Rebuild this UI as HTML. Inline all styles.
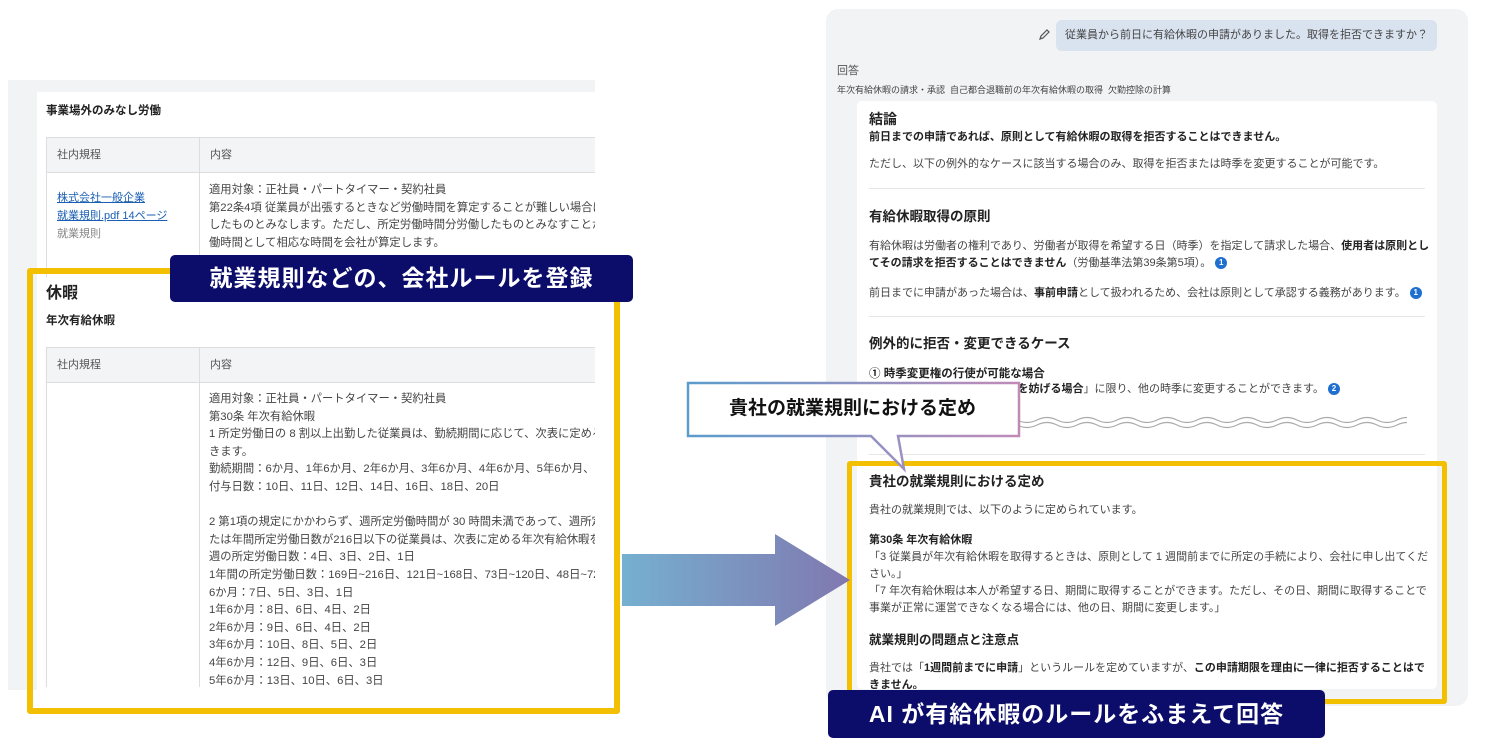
<!DOCTYPE html>
<html><head><meta charset="utf-8"><style>
*{margin:0;padding:0;box-sizing:border-box}
body{width:1505px;height:747px;background:#fff;position:relative;overflow:hidden;font-family:"Liberation Sans","Noto Sans CJK JP",sans-serif;color:#333}
.a{position:absolute}
.t{font-size:11px;line-height:17.6px;color:#444;white-space:nowrap}
.b{font-weight:bold;color:#222}
.th{background:#f3f4f6;border-top:1px solid #ddd;border-bottom:1px solid #ddd;height:36px;font-size:11px;color:#555;line-height:34px}
.r{font-size:11px;line-height:16.5px;color:#444;white-space:nowrap}
.num{display:inline-block;width:12px;height:12px;border-radius:6px;background:#1e6fd0;color:#fff;font-size:8px;line-height:12px;text-align:center;font-weight:bold;vertical-align:middle;margin-left:4px}
</style></head><body>
<!-- left panel -->
<div class="a" style="left:8px;top:80px;width:587px;height:610px;background:#f2f3f5"></div>
<div class="a" style="left:37px;top:92px;width:558px;height:598px;background:#fff;overflow:hidden">
 <div class="a b" style="left:9px;top:10px;font-size:11.5px">事業場外のみなし労働</div>
 <div class="a th" style="left:9px;top:45px;width:560px;border-left:1px solid #ddd"><span style="position:absolute;left:10px">社内規程</span><span style="position:absolute;left:163px">内容</span></div>
 <div class="a" style="left:162px;top:45px;width:1px;height:140px;background:#ddd"></div>
 <div class="a" style="left:9px;top:45px;width:1px;height:140px;background:#ddd"></div>
 <div class="a t" style="left:20px;top:98px;color:#1a5fb4;text-decoration:underline">株式会社一般企業<br>就業規則.pdf 14ページ</div>
 <div class="a t" style="left:20px;top:134px;color:#888">就業規則</div>
 <div class="a t" style="left:172px;top:90px;font-size:11.3px">適用対象：正社員・パートタイマー・契約社員<br>第22条4項 従業員が出張するときなど労働時間を算定することが難しい場合は、<br>したものとみなします。ただし、所定労働時間分労働したものとみなすことが不<br>働時間として相応な時間を会社が算定します。</div>
 <div class="a b" style="left:9px;top:187px;font-size:16px">休暇</div>
 <div class="a b" style="left:9px;top:220px;font-size:11.5px">年次有給休暇</div>
 <div class="a th" style="left:9px;top:255px;width:560px;border-left:1px solid #ddd"><span style="position:absolute;left:10px">社内規程</span><span style="position:absolute;left:163px">内容</span></div>
 <div class="a" style="left:162px;top:255px;width:1px;height:340px;background:#ddd"></div>
 <div class="a" style="left:9px;top:255px;width:1px;height:340px;background:#ddd"></div>
 <div class="a t" style="left:172px;top:299px;font-size:11.3px">適用対象：正社員・パートタイマー・契約社員<br>第30条 年次有給休暇<br>1 所定労働日の 8 割以上出勤した従業員は、勤続期間に応じて、次表に定める年<br>きます。<br>勤続期間：6か月、1年6か月、2年6か月、3年6か月、4年6か月、5年6か月、6年<br>付与日数：10日、11日、12日、14日、16日、18日、20日<br>&nbsp;<br>2 第1項の規定にかかわらず、週所定労働時間が 30 時間未満であって、週所定労<br>たは年間所定労働日数が216日以下の従業員は、次表に定める年次有給休暇を取<br>週の所定労働日数：4日、3日、2日、1日<br>1年間の所定労働日数：169日~216日、121日~168日、73日~120日、48日~72日<br>6か月：7日、5日、3日、1日<br>1年6か月：8日、6日、4日、2日<br>2年6か月：9日、6日、4日、2日<br>3年6か月：10日、8日、5日、2日<br>4年6か月：12日、9日、6日、3日<br>5年6か月：13日、10日、6日、3日</div>
</div>
<div class="a" style="left:27px;top:268px;width:593px;height:446px;border:6px solid #f2c000;border-radius:3px"></div>
<div class="a" style="left:170px;top:255px;width:463px;height:47px;background:#0c0c6b;border-radius:5px;color:#fff;font-size:23px;font-weight:bold;text-align:center;line-height:47px;letter-spacing:1px">就業規則などの、会社ルールを登録</div>

<!-- right panel -->
<div class="a" style="left:826px;top:9px;width:642px;height:697px;background:#f2f3f5;border-radius:12px"></div>
<svg class="a" style="left:1037px;top:28px" width="14" height="14"><path d="M3 11L4 8L10 2L12 4L6 10Z" fill="none" stroke="#555" stroke-width="1.2"/></svg>
<div class="a" style="left:1056px;top:20px;width:381px;height:31px;background:#d9e2ef;border-radius:6px;font-size:11px;line-height:31px;color:#444;text-align:center;white-space:nowrap">従業員から前日に有給休暇の申請がありました。取得を拒否できますか？</div>
<div class="a" style="left:837px;top:62px;font-size:11px;color:#555">回答</div>
<div class="a" style="left:837px;top:83px;font-size:9px;color:#444;white-space:nowrap">年次有給休暇の請求・承認&nbsp; 自己都合退職前の年次有給休暇の取得&nbsp; 欠勤控除の計算</div>
<div class="a" style="left:857px;top:101px;width:580px;height:588px;background:#fff;border-radius:5px;overflow:hidden">
 <div class="a b" style="left:12px;top:8px;font-size:14px">結論</div>
 <div class="a b" style="left:12px;top:27px;font-size:11px;white-space:nowrap">前日までの申請であれば、原則として有給休暇の取得を拒否することはできません。</div>
 <div class="a r" style="left:12px;top:55px">ただし、以下の例外的なケースに該当する場合のみ、取得を拒否または時季を変更することが可能です。</div>
 <div class="a" style="left:12px;top:87px;width:556px;height:1px;background:#e6e6e6"></div>
 <div class="a b" style="left:12px;top:104px;font-size:13.5px">有給休暇取得の原則</div>
 <div class="a r" style="left:12px;top:137px">有給休暇は労働者の権利であり、労働者が取得を希望する日（時季）を指定して請求した場合、<b class="b">使用者は原則とし</b><br><b class="b">てその請求を拒否することはできません</b>（労働基準法第39条第5項）。<span class="num">1</span></div>
 <div class="a r" style="left:12px;top:184px">前日までに申請があった場合は、<b class="b">事前申請</b>として扱われるため、会社は原則として承認する義務があります。<span class="num">1</span></div>
 <div class="a" style="left:12px;top:215px;width:556px;height:1px;background:#e6e6e6"></div>
 <div class="a b" style="left:12px;top:231px;font-size:13.5px">例外的に拒否・変更できるケース</div>
 <div class="a b" style="left:12px;top:264px;font-size:11.5px">① 時季変更権の行使が可能な場合</div>
 <div class="a r" style="left:12px;top:280px">事業主は、「<b class="b">事業の正常な運営を妨げる場合</b>」に限り、他の時季に変更することができます。<span class="num">2</span></div>
 <svg class="a" style="left:100px;top:313px" width="450" height="20"><path d="M0 6 q10 -5 20 0 t20 0 t20 0 t20 0 t20 0 t20 0 t20 0 t20 0 t20 0 t20 0 t20 0 t20 0 t20 0 t20 0 t20 0 t20 0 t20 0 t20 0 t20 0 t20 0 t20 0 t20 0 t20 0 M0 11 q10 -5 20 0 t20 0 t20 0 t20 0 t20 0 t20 0 t20 0 t20 0 t20 0 t20 0 t20 0 t20 0 t20 0 t20 0 t20 0 t20 0 t20 0 t20 0 t20 0 t20 0 t20 0 t20 0 t20 0" fill="none" stroke="#aaa" stroke-width="1.2"/></svg>
 <div class="a" style="left:12px;top:353px;width:556px;height:1px;background:#e6e6e6"></div>
 <div class="a b" style="left:12px;top:369px;font-size:13.5px">貴社の就業規則における定め</div>
 <div class="a r" style="left:12px;top:401px">貴社の就業規則では、以下のように定められています。</div>
 <div class="a r" style="left:12px;top:431px;line-height:17px"><b class="b">第30条 年次有給休暇</b><br>「3 従業員が年次有給休暇を取得するときは、原則として 1 週間前までに所定の手続により、会社に申し出てくだ<br>さい。」<br>「7 年次有給休暇は本人が希望する日、期間に取得することができます。ただし、その日、期間に取得することで<br>事業が正常に運営できなくなる場合には、他の日、期間に変更します。」</div>
 <div class="a b" style="left:12px;top:528px;font-size:12.5px">就業規則の問題点と注意点</div>
 <div class="a r" style="left:12px;top:559px">貴社では「<b class="b">1週間前までに申請</b>」というルールを定めていますが、<b class="b">この申請期限を理由に一律に拒否することはで</b><br><b class="b">きません。</b></div>
</div>
<div class="a" style="left:847px;top:461px;width:600px;height:243px;border:5px solid #f2c000;border-radius:3px"></div>

<!-- arrow -->
<svg class="a" style="left:620px;top:533px" width="232" height="94"><defs><linearGradient id="g" x1="0" x2="1"><stop offset="0" stop-color="#76b0d0"/><stop offset="1" stop-color="#8078b0"/></linearGradient></defs><path d="M2 21H155V1L230 47L155 93V73H2Z" fill="url(#g)"/></svg>

<!-- callout -->
<svg class="a" style="left:686px;top:381px" width="336" height="92"><defs><linearGradient id="c" x1="0" x2="1"><stop offset="0" stop-color="#5a9ccc"/><stop offset="1" stop-color="#c08ab8"/></linearGradient></defs><path d="M2 2H333V55H212L218 88L185 55H2Z" fill="#fff" stroke="url(#c)" stroke-width="2.5"/></svg>
<div class="a b" style="left:686px;top:381px;width:333px;height:55px;line-height:55px;text-align:center;font-size:19px;color:#111">貴社の就業規則における定め</div>

<div class="a" style="left:828px;top:690px;width:497px;height:48px;background:#0c0c6b;border-radius:5px;color:#fff;font-size:23px;font-weight:bold;text-align:center;line-height:48px;letter-spacing:1px">AI が有給休暇のルールをふまえて回答</div>
</body></html>
